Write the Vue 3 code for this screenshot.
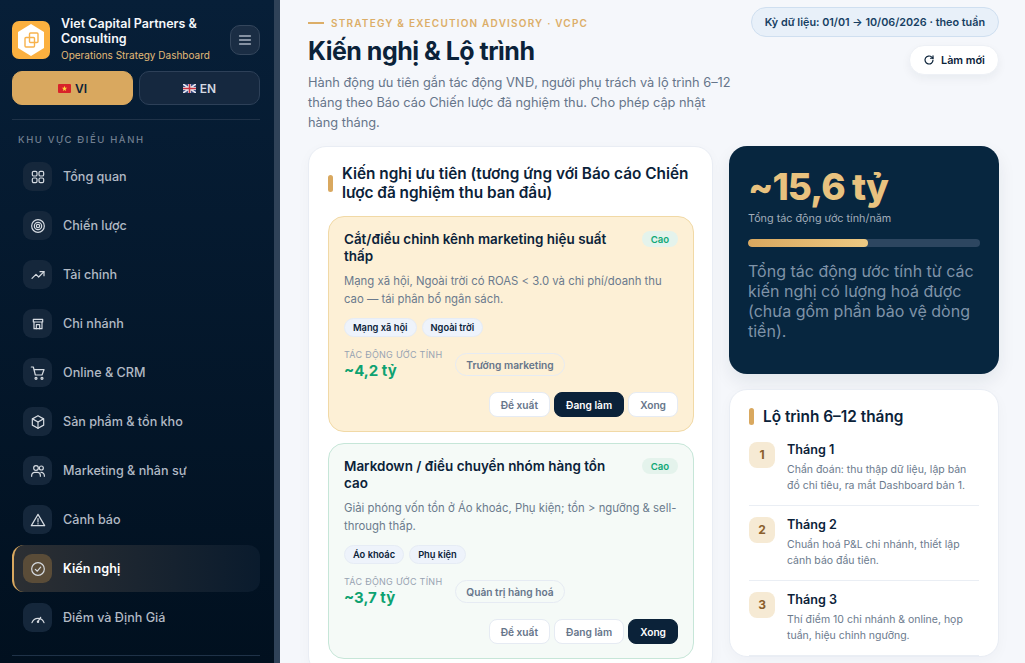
<script setup>
const nav = [
  { label: 'Tổng quan', rects: [[3.500, 3.500, 7, 7], [13.500, 3.500, 7, 7], [3.500, 13.500, 7, 7], [13.500, 13.500, 7, 7]] },
  { label: 'Chiến lược', circles: [[12, 12, 9.500], [12, 12, 5.500], [12, 12, 2.500]] },
  { label: 'Tài chính', paths: ['M3 17l6-6 4 4 8-8', 'M15 7h6v6'] },
  { label: 'Chi nhánh', paths: ['M5 5h14v4H5z', 'M6 9v10h12V9', 'M9.500 19v-6h5v6'] },
  { label: 'Online & CRM', paths: ['M2 3h3l3 12h10l3-8H6'], circles: [[9, 20, 1.500], [18, 20, 1.500]] },
  { label: 'Sản phẩm & tồn kho', paths: ['M12 2.500l8.500 4.800v9.400L12 21.500l-8.500-4.800V7.300z', 'M3.800 7.300L12 12l8.200-4.700', 'M12 12v9.500'] },
  { label: 'Marketing & nhân sự', paths: ['M2.500 20v-1.500a4.500 4.500 0 0 1 4.500-4.500h4a4.500 4.500 0 0 1 4.500 4.500V20', 'M16.500 14.200a4.500 4.500 0 0 1 5 4.300V20'], circles: [[9, 7.500, 3.500], [17, 7.500, 3]] },
  { label: 'Cảnh báo', paths: ['M12 3.500L22 20.500H2z', 'M12 10v5', 'M12 17.500v.5'] },
  { label: 'Kiến nghị', active: true, paths: ['M8 12.500l3 2.800 5-6'], circles: [[12, 12, 9.500]] },
  { label: 'Điểm và Định Giá', paths: ['M3 19a9.500 9.500 0 0 1 18 0', 'M12 17l4-6'], circles: [[12, 17.500, 1]] },
]

const recs = [
  {
    tone: 'amber',
    title: 'Cắt/điều chỉnh kênh marketing hiệu suất thấp',
    desc: 'Mạng xã hội, Ngoài trời có ROAS < 3.0 và chi phí/doanh thu cao — tái phân bổ ngân sách.',
    tags: ['Mạng xã hội', 'Ngoài trời'],
    impact: '~4,2 tỷ',
    owner: 'Trưởng marketing',
    status: 'Đang làm',
  },
  {
    tone: 'mint',
    title: 'Markdown / điều chuyển nhóm hàng tồn cao',
    desc: 'Giải phóng vốn tồn ở Áo khoác, Phụ kiện; tồn > ngưỡng & sell-through thấp.',
    tags: ['Áo khoác', 'Phụ kiện'],
    impact: '~3,7 tỷ',
    owner: 'Quản trị hàng hoá',
    status: 'Xong',
  },
]

const statuses = ['Đề xuất', 'Đang làm', 'Xong']

const steps = [
  { n: 1, title: 'Tháng 1', desc: 'Chẩn đoán: thu thập dữ liệu, lập bản đồ chỉ tiêu, ra mắt Dashboard bản 1.' },
  { n: 2, title: 'Tháng 2', desc: 'Chuẩn hoá P&L chi nhánh, thiết lập cảnh báo đầu tiên.' },
  { n: 3, title: 'Tháng 3', desc: 'Thí điểm 10 chi nhánh & online, họp tuần, hiệu chỉnh ngưỡng.' },
]
</script>

<template>
  <div class="shell">
    <aside class="side">
      <div class="side-inner">
        <div class="brand">
          <svg class="logo" viewBox="0 0 38 38">
            <rect width="38" height="38" rx="7" fill="#fbb03f" />
            <path d="M19 3l13 8v16l-13 8-13-8V11z" fill="#fff" />
            <rect x="17.500" y="12" width="8.500" height="9.500" rx="1" fill="none" stroke="#f7b24c" stroke-width="1.400" />
            <rect x="13" y="16.500" width="9.500" height="9.500" rx="1" fill="none" stroke="#f7b24c" stroke-width="1.400" />
          </svg>
          <div class="brand-text">
            <div class="brand-name">Viet Capital Partners &amp; Consulting</div>
            <div class="brand-sub">Operations Strategy Dashboard</div>
          </div>
          <button class="burger" aria-label="Menu">
            <svg viewBox="0 0 24 24" width="16" height="16" fill="none" stroke="#aab4c2" stroke-width="2.400" stroke-linecap="round">
              <path d="M4 6h16M4 12h16M4 18h16" />
            </svg>
          </button>
        </div>

        <div class="langs">
          <button class="lang lang-on">
            <svg class="flag" viewBox="0 0 13 9">
              <rect width="13" height="9" rx="1" fill="#d8232a" />
              <path d="M6.500 1.800l.7 2h2.100l-1.700 1.300.6 2-1.700-1.200-1.700 1.200.6-2-1.700-1.300h2.100z" fill="#ffd83d" />
            </svg>
            VI
          </button>
          <button class="lang">
            <svg class="flag" viewBox="0 0 13 9">
              <rect width="13" height="9" rx="1" fill="#3c4f86" />
              <path d="M0 0l13 9M13 0L0 9" stroke="#e8e8ee" stroke-width="1.600" />
              <path d="M6.500 0v9M0 4.500h13" stroke="#e8e8ee" stroke-width="2.800" />
              <path d="M6.500 0v9M0 4.500h13" stroke="#c8313e" stroke-width="1.500" />
            </svg>
            EN
          </button>
        </div>

        <div class="rule"></div>
        <div class="nav-label">KHU VỰC ĐIỀU HÀNH</div>

        <nav class="nav">
          <a v-for="item in nav" :key="item.label" class="nav-item" :class="{ active: item.active }">
            <span class="nav-icon">
              <svg viewBox="0 0 24 24" width="16" height="16" fill="none" stroke="currentColor" stroke-width="1.800" stroke-linecap="round" stroke-linejoin="round">
                <path v-for="d in item.paths || []" :key="d" :d="d" />
                <circle v-for="c in item.circles || []" :key="c.join()" :cx="c[0]" :cy="c[1]" :r="c[2]" />
                <rect v-for="r in item.rects || []" :key="r.join()" :x="r[0]" :y="r[1]" :width="r[2]" :height="r[3]" rx="2" />
              </svg>
            </span>
            <span>{{ item.label }}</span>
          </a>
        </nav>

        <div class="rule rule-end"></div>
      </div>
      <div class="side-strip"></div>
    </aside>

    <main class="main">
      <header class="top">
        <div class="top-left">
          <div class="eyebrow"><span class="eyebrow-dash"></span>STRATEGY &amp; EXECUTION ADVISORY · VCPC</div>
          <h1 class="page-title">Kiến nghị &amp; Lộ trình</h1>
          <p class="page-sub">Hành động ưu tiên gắn tác động VNĐ, người phụ trách và lộ trình <span class="nobreak">6–12</span> tháng theo Báo cáo Chiến lược đã nghiệm thu. Cho phép cập nhật hàng tháng.</p>
        </div>
        <div class="top-right">
          <div class="period">Kỳ dữ liệu: 01/01 → 10/06/2026 · theo tuần</div>
          <button class="refresh">
            <svg viewBox="0 0 24 24" width="12" height="12" fill="none" stroke="#0b2239" stroke-width="2.400" stroke-linecap="round" stroke-linejoin="round">
              <path d="M20 12a8 8 0 1 1-2.500-5.800L20 8.500" />
              <path d="M20 3.500v5h-5" />
            </svg>
            Làm mới
          </button>
        </div>
      </header>

      <div class="columns">
        <section class="card">
          <h2 class="card-title"><span class="bar bar-tall"></span><span>Kiến nghị ưu tiên (tương ứng với Báo cáo Chiến lược đã nghiệm thu ban đầu)</span></h2>
          <div class="recs">
            <article v-for="r in recs" :key="r.title" class="rec" :class="r.tone">
              <div class="rec-head">
                <h3 class="rec-title">{{ r.title }}</h3>
                <span class="prio">Cao</span>
              </div>
              <p class="rec-desc">{{ r.desc }}</p>
              <div class="tags">
                <span v-for="t in r.tags" :key="t" class="tag">{{ t }}</span>
              </div>
              <div class="impact-row">
                <div class="impact">
                  <div class="impact-label">TÁC ĐỘNG ƯỚC TÍNH</div>
                  <div class="impact-value">{{ r.impact }}</div>
                </div>
                <span class="owner">{{ r.owner }}</span>
              </div>
              <div class="states">
                <button v-for="s in statuses" :key="s" class="state" :class="{ on: s === r.status }">{{ s }}</button>
              </div>
            </article>
          </div>
        </section>

        <div class="right">
          <section class="total">
            <div class="total-value">~15,6 tỷ</div>
            <div class="total-label">Tổng tác động ước tính/năm</div>
            <div class="track"><div class="fill" :style="{ width: '51.700%' }"></div></div>
            <p class="total-note">Tổng tác động ước tính từ các kiến nghị có lượng hoá được (chưa gồm phần bảo vệ dòng tiền).</p>
          </section>

          <section class="card road">
            <h2 class="card-title road-title"><span class="bar"></span><span>Lộ trình 6–12 tháng</span></h2>
            <div v-for="s in steps" :key="s.n" class="step">
              <div class="step-n">{{ s.n }}</div>
              <div>
                <div class="step-title">{{ s.title }}</div>
                <div class="step-desc">{{ s.desc }}</div>
              </div>
            </div>
          </section>
        </div>
      </div>
    </main>
  </div>
</template>

<style>
html, body { margin: 0; height: 100%; overflow: hidden; background: #f5f7fb; }
</style>

<style scoped>
* { box-sizing: border-box; }
.shell {
  display: flex;
  width: 100%;
  height: 100vh;
  overflow: hidden;
  font-family: Inter, "Noto Sans", sans-serif;
  color: #0b2239;
  background: #f5f7fb;
}
button { font-family: inherit; cursor: pointer; }

.side {
  flex: 0 0 280px;
  display: flex;
  height: 100%;
  background: linear-gradient(180deg, #071f38 0%, #01101f 100%);
}
.side-inner { flex: 1; min-width: 0; padding: 16px 14px 0 12px; }
.side-strip { flex: 0 0 6px; background: #2f4258; }

.brand { display: flex; align-items: center; gap: 11px; height: 47px; }
.logo { flex: 0 0 38px; width: 38px; height: 38px; }
.brand-text { flex: 1; min-width: 0; }
.brand-name { font-size: 12.500px; font-weight: 600; line-height: 15px; color: #f5f7fb; }
.brand-sub { font-size: 10px; line-height: 15px; margin-top: 2px; color: #e3bb78; white-space: nowrap; }
.burger {
  flex: 0 0 30px;
  height: 30px;
  padding: 0;
  display: flex;
  align-items: center;
  justify-content: center;
  border-radius: 10px;
  background: #1a2d44;
  border: 1px solid #34465c;
}

.langs { display: grid; grid-template-columns: 1fr 1fr; gap: 6px; margin-top: 8px; }
.lang {
  height: 34px;
  display: flex;
  align-items: center;
  justify-content: center;
  gap: 4px;
  font-size: 12px;
  font-weight: 600;
  color: #d3d9e1;
  background: #15283f;
  border: 1px solid #2d4058;
  border-radius: 10px;
}
.lang-on { background: #d9a85f; border-color: #d9a85f; color: #0b2239; }
.flag { width: 13px; height: 9px; }

.rule { height: 1px; background: #1f3248; margin-top: 14px; }
.nav-label {
  margin: 14px 0 0 6px;
  font-size: 9.500px;
  line-height: 12px;
  font-weight: 500;
  letter-spacing: 0.17em;
  color: #717f90;
}

.nav { display: flex; flex-direction: column; gap: 2px; margin-top: 7px; }
.nav-item {
  display: flex;
  align-items: center;
  gap: 11px;
  height: 47px;
  padding: 0 11px;
  border-radius: 12px;
  font-size: 12.600px;
  font-weight: 500;
  color: #b1b9c4;
}
.nav-icon {
  flex: 0 0 29px;
  height: 29px;
  display: flex;
  align-items: center;
  justify-content: center;
  border-radius: 9px;
  background: #15273b;
  color: #d6dbe1;
}
.nav-item.active {
  color: #fff;
  font-weight: 600;
  border-left: 2px solid #d9a85f;
  padding-left: 9px;
  background: linear-gradient(90deg, #2c2f33 0%, #0a1b2d 100%);
}
.nav-item.active .nav-icon { background: #5a4c38; }
.rule-end { margin-top: 14px; }

.main { flex: 1; min-width: 0; height: 100%; overflow: hidden; padding: 7px 26px 0 28px; }
.top { display: flex; justify-content: space-between; align-items: flex-start; gap: 16px; }
.top-left { width: 430px; }
.eyebrow {
  display: flex;
  align-items: center;
  gap: 7px;
  margin-top: 9px;
  font-size: 10px;
  line-height: 14px;
  font-weight: 600;
  letter-spacing: 0.12em;
  color: #dcae68;
  white-space: nowrap;
}
.eyebrow-dash { width: 16px; height: 2px; background: #dcae68; }
.page-title {
  margin: 4px 0 0;
  font-size: 25px;
  line-height: 34px;
  font-weight: 700;
  letter-spacing: -0.02em;
  color: #0b2239;
}
.page-sub { margin: 5px 0 0; font-size: 12.800px; line-height: 20px; color: #66758a; }
.nobreak { white-space: nowrap; }

.top-right { display: flex; flex-direction: column; align-items: flex-end; gap: 8px; }
.period {
  height: 30px;
  padding: 0 13px;
  display: flex;
  align-items: center;
  border-radius: 15px;
  background: #e8f0f9;
  border: 1px solid #cfdff0;
  font-size: 10.800px;
  font-weight: 600;
  color: #173f63;
  white-space: nowrap;
}
.refresh {
  height: 30px;
  width: 90px;
  display: flex;
  align-items: center;
  justify-content: center;
  gap: 6px;
  border-radius: 15px;
  background: #fff;
  border: 1px solid #eef1f6;
  box-shadow: 0 4px 10px rgba(11, 34, 57, 0.05);
  font-size: 10.800px;
  font-weight: 600;
  color: #0b2239;
}

.columns { display: grid; grid-template-columns: 405px 270px; gap: 16px; margin-top: 13px; align-items: start; }
.card {
  background: #fff;
  border: 1px solid #e9edf4;
  border-radius: 18px;
  padding: 17px 18px 14px 19px;
  box-shadow: 0 4px 14px rgba(11, 34, 57, 0.03);
}
.card-title {
  display: flex;
  align-items: center;
  gap: 9px;
  margin: 0;
  font-size: 15.360px;
  line-height: 19.200px;
  font-weight: 600;
  color: #0b2239;
}
.bar { flex: 0 0 5px; height: 17px; border-radius: 3px; background: #d9a85f; }
.recs { display: flex; flex-direction: column; gap: 11px; margin-top: 14px; }
.rec { border-radius: 16px; border: 1px solid; padding: 14px 15px; }
.amber { background: #fdf0d6; border-color: #f1d9a6; }
.mint { background: #f5faf7; border-color: #c6e6d8; }
.rec-head { display: flex; justify-content: space-between; align-items: flex-start; gap: 30px; }
.rec-title { margin: 0; font-size: 13.440px; line-height: 17px; font-weight: 600; color: #0b2239; }
.prio {
  flex: 0 0 36px;
  height: 16px;
  display: flex;
  align-items: center;
  justify-content: center;
  border-radius: 8px;
  background: #e4f3ec;
  font-size: 9.600px;
  font-weight: 600;
  color: #10a876;
}
.rec-desc { margin: 8px 0 0; font-size: 11.350px; line-height: 17.400px; color: #6b7a8d; }
.tags { display: flex; gap: 5px; margin-top: 10px; }
.tag {
  height: 19px;
  padding: 0 8px;
  display: flex;
  align-items: center;
  border-radius: 10px;
  background: #eef3fb;
  border: 1px solid #e6ecf5;
  font-size: 9.300px;
  font-weight: 600;
  color: #0b2239;
}
.impact-row { display: flex; align-items: center; gap: 13px; margin-top: 12px; }
.impact { width: 98px; }
.impact-label { font-size: 9px; line-height: 12px; color: #98a3b2; white-space: nowrap; letter-spacing: 0.03em; }
.impact-value { font-size: 15px; line-height: 19px; font-weight: 700; color: #0ea271; }
.owner {
  height: 23px;
  width: 110px;
  display: flex;
  align-items: center;
  justify-content: center;
  border-radius: 12px;
  border: 1px solid #e6ebf3;
  font-size: 10.200px;
  font-weight: 600;
  color: #66758a;
  white-space: nowrap;
}
.states { display: flex; justify-content: flex-end; gap: 4px; margin-top: 12px; }
.state {
  height: 25px;
  padding: 0 11px;
  border-radius: 8px;
  background: #fff;
  border: 1px solid #e6ebf3;
  font-size: 10.200px;
  font-weight: 600;
  color: #66758a;
}
.state.on { background: #0b2239; border-color: #0b2239; color: #fff; }

.right { display: flex; flex-direction: column; gap: 15px; }
.total {
  height: 228px;
  padding: 20px 19px 0;
  border-radius: 18px;
  background: #07263f;
  box-shadow: 0 8px 18px rgba(11, 34, 57, 0.08);
}
.total-value { font-size: 37px; line-height: 42px; font-weight: 800; letter-spacing: -0.025em; color: #e8c27f; }
.total-label { margin-top: 4px; font-size: 10.800px; line-height: 14px; color: #a2adba; }
.track { height: 8px; margin-top: 13px; border-radius: 4px; background: #2d4660; overflow: hidden; }
.fill { height: 100%; border-radius: 4px; background: linear-gradient(90deg, #d9a85f, #edc983); }
.total-note { margin: 14px 0 0; font-size: 16px; line-height: 20px; color: #7f93a8; }

.road { padding: 17px 19px 0; }
.step { display: flex; gap: 12px; padding: 11px 0 11px; border-bottom: 1px solid #eaeef4; }
.road-title + .step { padding-top: 15.500px; }
.step-n {
  flex: 0 0 26px;
  height: 26px;
  display: flex;
  align-items: center;
  justify-content: center;
  border-radius: 8px;
  background: #f6ead4;
  font-size: 12px;
  font-weight: 700;
  color: #8a5f2c;
}
.step-title { font-size: 12.600px; line-height: 15px; font-weight: 600; color: #0b2239; }
.step-desc { margin-top: 5px; font-size: 10.500px; line-height: 16px; color: #6b7a8d; }
</style>
